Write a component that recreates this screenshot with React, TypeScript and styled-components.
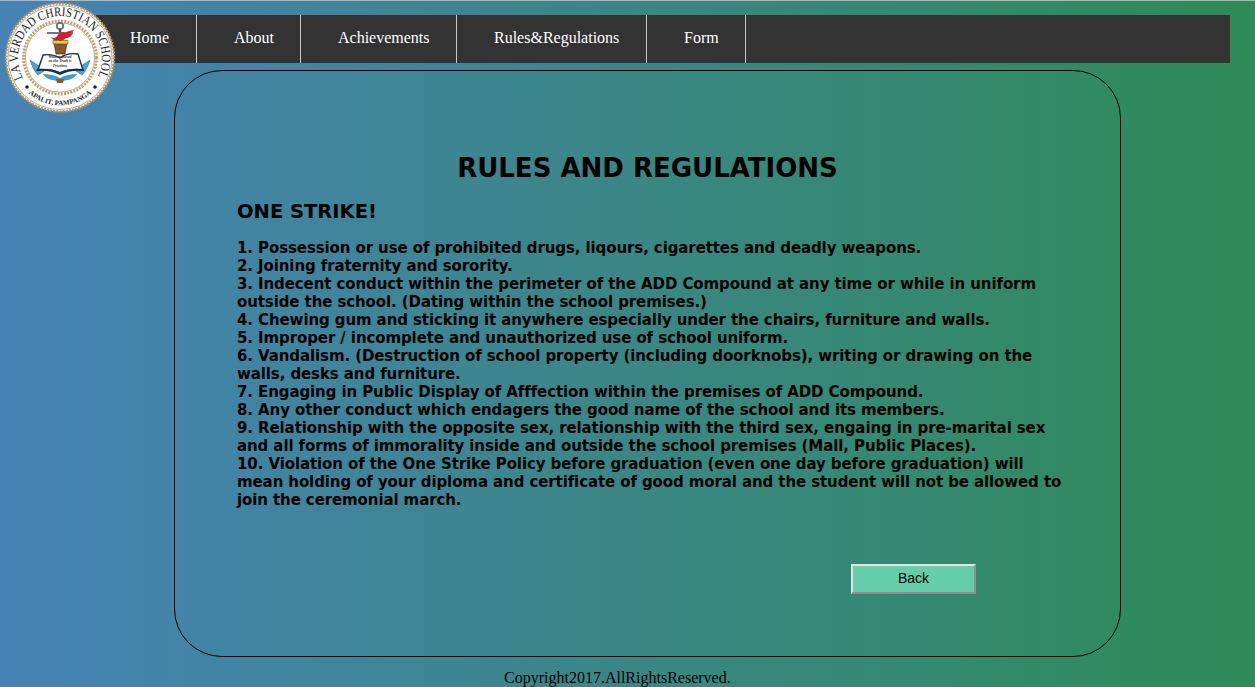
import React from "react";
import styled, { createGlobalStyle } from "styled-components";

const Global = createGlobalStyle`
  html, body { margin: 0; padding: 0; height: 100%; }
  body { overflow: hidden; }
`;

const Page = styled.div`
  position: relative;
  box-sizing: border-box;
  width: 1255px;
  height: 687px;
  overflow: hidden;
  border-top: 1px solid #b4b4b4;
  background: linear-gradient(to right, #4682b4, #2e8b57);
  font-family: "Liberation Serif", "Times New Roman", serif;
`;

const Logo = styled.svg`
  position: absolute;
  left: 4px;
  top: 1px;
  width: 112px;
  height: 111px;
`;

const Nav = styled.nav`
  display: flex;
  box-sizing: border-box;
  height: 48px;
  margin: 14px 25px 0 93px;
  background: #333333;
`;

const NavItem = styled.a<{ $w: number; $pad: number }>`
  box-sizing: border-box;
  width: ${(p) => p.$w}px;
  padding-left: ${(p) => p.$pad}px;
  border-right: 1px solid #c8c8c8;
  color: #ffffff;
  font-size: 16px;
  line-height: 46px;
  white-space: nowrap;
`;

const Panel = styled.main`
  box-sizing: border-box;
  width: 947px;
  height: 587px;
  margin: 7px 0 0 174px;
  padding: 82px 62px 0;
  border: 1px solid #000000;
  border-radius: 48px;
  color: #000000;
  font-family: Verdana, "DejaVu Sans", sans-serif;
  font-weight: bold;
`;

const Title = styled.h1`
  margin: 0 0 18px;
  font-size: 26px;
  line-height: 30px;
  font-weight: bold;
  text-align: center;
`;

const Subtitle = styled.h2`
  margin: 0 0 16px;
  font-size: 19.5px;
  line-height: 22px;
  font-weight: bold;
`;

const Rule = styled.p`
  margin: 0;
  font-size: 15px;
  line-height: 18px;
  letter-spacing: -0.1px;
  white-space: nowrap;
`;

const Actions = styled.div`
  display: flex;
  justify-content: flex-end;
  margin-top: 55px;
  padding-right: 82px;
`;

const BackButton = styled.button`
  box-sizing: border-box;
  width: 125px;
  height: 30px;
  padding: 0 0 2px;
  border: 2px solid;
  border-color: #e2e2e2 #8e8e8e #8e8e8e #e2e2e2;
  background: #66cdaa;
  color: #000000;
  font-family: "Liberation Sans", Arial, sans-serif;
  font-size: 14px;
`;

const Footer = styled.footer`
  margin: 12px 0 0 504px;
  color: #000000;
  font-size: 16px;
  line-height: 18px;
  white-space: nowrap;
`;

const navItems = [
  { label: "Home", w: 104, pad: 37 },
  { label: "About", w: 104, pad: 37 },
  { label: "Achievements", w: 156, pad: 37 },
  { label: "Rules&Regulations", w: 190, pad: 37 },
  { label: "Form", w: 99, pad: 37 },
];

const rules: string[][] = [
  ["1. Possession or use of prohibited drugs, liqours, cigarettes and deadly weapons."],
  ["2. Joining fraternity and sorority."],
  [
    "3. Indecent conduct within the perimeter of the ADD Compound at any time or while in uniform",
    "outside the school. (Dating within the school premises.)",
  ],
  ["4. Chewing gum and sticking it anywhere especially under the chairs, furniture and walls."],
  ["5. Improper / incomplete and unauthorized use of school uniform."],
  [
    "6. Vandalism. (Destruction of school property (including doorknobs), writing or drawing on the",
    "walls, desks and furniture.",
  ],
  ["7. Engaging in Public Display of Afffection within the premises of ADD Compound."],
  ["8. Any other conduct which endagers the good name of the school and its members."],
  [
    "9. Relationship with the opposite sex, relationship with the third sex, engaing in pre-marital sex",
    "and all forms of immorality inside and outside the school premises (Mall, Public Places).",
  ],
  [
    "10. Violation of the One Strike Policy before graduation (even one day before graduation) will",
    "mean holding of your diploma and certificate of good moral and the student will not be allowed to",
    "join the ceremonial march.",
  ],
];

function SchoolLogo() {
  return (
    <Logo viewBox="0 0 112 111" aria-label="La Verdad Christian School seal">
      <defs>
        <path id="sealTop" d="M 19 76 A 42 42 0 1 1 93 76" fill="none" />
        <path id="sealBottom" d="M 14 78 A 47.5 47.5 0 0 0 98 78" fill="none" />
      </defs>
      <circle cx="56" cy="55.5" r="54" fill="#ffffff" stroke="#b8965a" strokeWidth="2.6" strokeDasharray="2 1.2" />
      <circle cx="56" cy="55.5" r="52" fill="none" stroke="#6d5a3a" strokeWidth="0.5" />
      <text fontFamily="'Liberation Serif', serif" fontSize="13" fill="#222222">
        <textPath href="#sealTop" textLength="171" lengthAdjust="spacingAndGlyphs">LA VERDAD CHRISTIAN SCHOOL</textPath>
      </text>
      <text fontFamily="'Liberation Serif', serif" fontSize="7" fill="#222222" fontWeight="bold" textAnchor="middle">
        <textPath href="#sealBottom" startOffset="50%">APALIT, PAMPANGA</textPath>
      </text>
      <circle cx="23" cy="85" r="1.8" fill="#222222" />
      <circle cx="91" cy="85" r="1.8" fill="#222222" />
      <circle cx="56" cy="55.5" r="36.5" fill="#ffffff" stroke="#c2a15f" strokeWidth="2.8" strokeDasharray="2 1.2" />
      <circle cx="56" cy="55.5" r="34.6" fill="none" stroke="#6b5a3a" strokeWidth="0.5" />
      <circle cx="56" cy="24" r="3.2" fill="none" stroke="#5f6f7c" strokeWidth="1.7" />
      <path d="M56 27v14" stroke="#44525e" strokeWidth="2.4" />
      <path d="M43 31h26" stroke="#6b7a86" strokeWidth="2" />
      <path d="M50 41h13l-2 11h-9z" fill="#8a5a2b" stroke="#3b2a18" strokeWidth="0.7" />
      <path d="M49 38.5h15v3.5h-15z" fill="#e4c94a" stroke="#3b2a18" strokeWidth="0.5" />
      <path d="M47 35c3 2 5 1 7-2 1-3 5-4 7-2 2-2 5-2 9-3-1 2-3 3-5 4 2 0 3 0 4-1-1 3-4 5-7 5-2 2-4 3-8 2-3 1-5 0-7-3z" fill="#d5202a" />
      <path d="M26 58c2 6 4 11 8 15l6-4-3-2 1-9-3 6z" fill="#4ba6d6" stroke="#1a4e7a" strokeWidth="0.5" />
      <path d="M86 58c-2 6-4 11-8 15l-6-4 3-2-1-9 3 6z" fill="#4ba6d6" stroke="#1a4e7a" strokeWidth="0.5" />
      <path d="M56 56c-5-3-11-4-17-3l-5 15c8-1 16 0 22 3 6-3 15-4 23-3l-5-16c-6-1-13 0-18 4z" fill="#ffffff" stroke="#152d63" strokeWidth="1.4" />
      <path d="M32 69c8-1 17 0 24 4 7-4 16-5 24-4l-1-2c-8-1-17 0-23 3-6-3-15-4-23-3z" fill="#152d63" />
      <path d="M39 72c6 0 12 1 17 4 5-3 11-4 17-4-3 5-10 7-17 7s-14-2-17-7z" fill="#3d9ed2" />
      <path d="M52 77h8l-1 4h-6z" fill="#8a5a2b" />
      <text x="56" y="55.5" textAnchor="middle" fontFamily="'Liberation Serif', serif" fontStyle="italic" fontWeight="bold" fontSize="3.8" fill="#222222">Wisdom Based</text>
      <text x="56" y="60" textAnchor="middle" fontFamily="'Liberation Serif', serif" fontStyle="italic" fontWeight="bold" fontSize="3.8" fill="#222222">on the Truth is</text>
      <text x="56" y="64.5" textAnchor="middle" fontFamily="'Liberation Serif', serif" fontStyle="italic" fontWeight="bold" fontSize="3.8" fill="#222222">Priceless</text>
    </Logo>
  );
}

export default function App() {
  return (
    <Page>
      <Global />
      <Nav>
        {navItems.map((item) => (
          <NavItem key={item.label} $w={item.w} $pad={item.pad}>
            {item.label}
          </NavItem>
        ))}
      </Nav>
      <SchoolLogo />
      <Panel>
        <Title>RULES AND REGULATIONS</Title>
        <Subtitle>ONE STRIKE!</Subtitle>
        {rules.map((lines) => (
          <Rule key={lines[0]}>
            {lines.map((line, i) => (
              <React.Fragment key={line}>
                {i > 0 && <br />}
                {line}
              </React.Fragment>
            ))}
          </Rule>
        ))}
        <Actions>
          <BackButton>Back</BackButton>
        </Actions>
      </Panel>
      <Footer>Copyright2017.AllRightsReserved.</Footer>
    </Page>
  );
}
